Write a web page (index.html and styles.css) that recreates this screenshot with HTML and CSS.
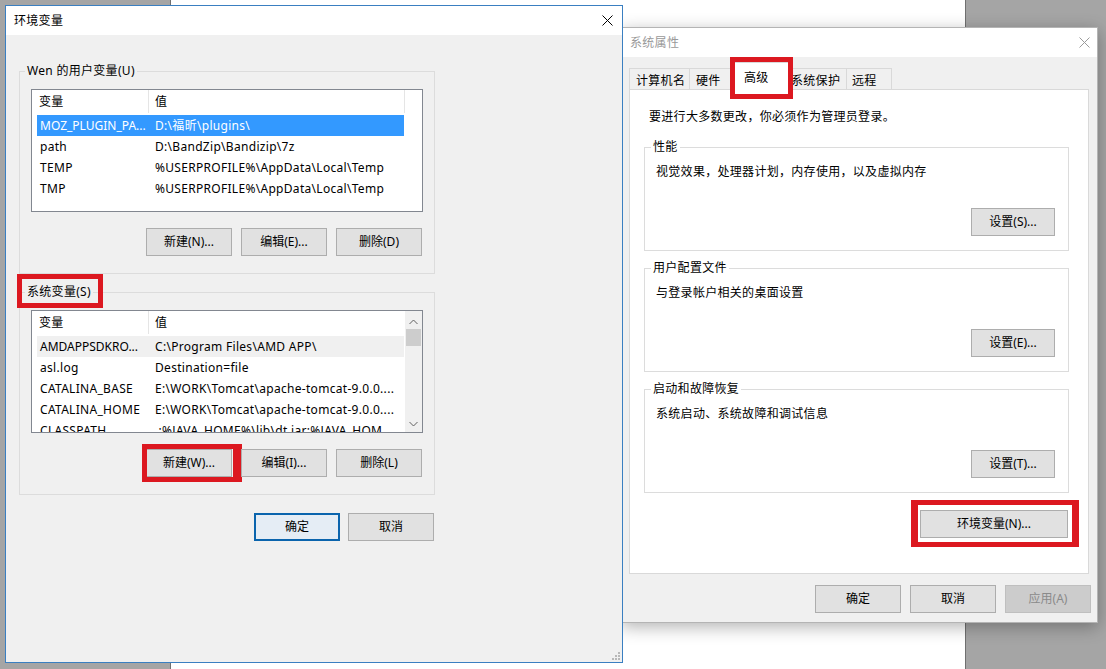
FILE: index.html
```html
<!DOCTYPE html>
<html lang="zh-CN">
<head>
<meta charset="utf-8">
<title>环境变量</title>
<link rel="stylesheet" href="styles.css">
</head>
<body>
<div class="desktop">
  <div class="bgwin"></div>

  <section class="dlg sys">
    <header class="titlebar">
      <span class="title">系统属性</span>
      <span class="close"><svg width="11" height="11" viewBox="0 0 11 11"><path d="M0.5 0.5L10.5 10.5M10.5 0.5L0.5 10.5" stroke="#9a9a9a" stroke-width="1" fill="none"/></svg></span>
    </header>
    <div class="sys-body">
      <nav class="tabs">
        <span class="tab t1">计算机名</span>
        <span class="tab t2">硬件</span>
        <span class="tab sel">高级<i class="mark m-tab"></i></span>
        <span class="tab t4">系统保护</span>
        <span class="tab t5">远程</span>
      </nav>
      <div class="panel">
        <p class="note">要进行大多数更改，你必须作为管理员登录。</p>
        <fieldset class="grp sg1">
          <legend>性能</legend>
          <p>视觉效果，处理器计划，内存使用，以及虚拟内存</p>
          <div class="brow"><button class="btn bs">设置(S)...</button></div>
        </fieldset>
        <fieldset class="grp sg2">
          <legend>用户配置文件</legend>
          <p>与登录帐户相关的桌面设置</p>
          <div class="brow"><button class="btn bs">设置(E)...</button></div>
        </fieldset>
        <fieldset class="grp sg3">
          <legend>启动和故障恢复</legend>
          <p>系统启动、系统故障和调试信息</p>
          <div class="brow"><button class="btn bs">设置(T)...</button></div>
        </fieldset>
        <div class="envrow"><button class="btn benv">环境变量(N)...<i class="mark m-env"></i></button></div>
      </div>
      <div class="foot">
        <button class="btn">确定</button>
        <button class="btn">取消</button>
        <button class="btn dis">应用(A)</button>
      </div>
    </div>
  </section>

  <section class="dlg env">
    <header class="titlebar">
      <span class="title">环境变量</span>
      <span class="close"><svg width="11" height="11" viewBox="0 0 11 11"><path d="M0.5 0.5L10.5 10.5M10.5 0.5L0.5 10.5" stroke="#000" stroke-width="1" fill="none"/></svg></span>
    </header>
    <div class="env-body">
      <div class="col">
        <fieldset class="grp eg1">
          <legend>Wen 的用户变量(U)</legend>
          <div class="list">
            <div class="lmain">
              <div class="lhead"><span class="hc hc1">变量</span><span class="hc hc2">值</span></div>
              <div class="rows">
                <div class="row sel"><span class="tight">MOZ_PLUGIN_PA...</span><span>D:\福昕\plugins\</span></div>
                <div class="row"><span>path</span><span>D:\BandZip\Bandizip\7z</span></div>
                <div class="row"><span>TEMP</span><span>%USERPROFILE%\AppData\Local\Temp</span></div>
                <div class="row"><span>TMP</span><span>%USERPROFILE%\AppData\Local\Temp</span></div>
              </div>
            </div>
          </div>
          <div class="brow">
            <button class="btn">新建(N)...</button>
            <button class="btn">编辑(E)...</button>
            <button class="btn">删除(D)</button>
          </div>
        </fieldset>

        <fieldset class="grp eg2">
          <legend class="mleg">系统变量(S)<i class="mark m-leg"></i></legend>
          <div class="list">
            <div class="lmain">
              <div class="lhead"><span class="hc hc1">变量</span><span class="hc hc2 last">值</span></div>
              <div class="rows">
                <div class="row hl"><span class="tight">AMDAPPSDKRO...</span><span>C:\Program Files\AMD APP\</span></div>
                <div class="row"><span>asl.log</span><span>Destination=file</span></div>
                <div class="row"><span>CATALINA_BASE</span><span>E:\WORK\Tomcat\apache-tomcat-9.0.0....</span></div>
                <div class="row"><span>CATALINA_HOME</span><span>E:\WORK\Tomcat\apache-tomcat-9.0.0....</span></div>
                <div class="row"><span>CLASSPATH</span><span>.;%JAVA_HOME%\lib\dt.jar;%JAVA_HOM</span></div>
              </div>
            </div>
            <div class="sb">
              <span class="sb-up"><svg width="9" height="6" viewBox="0 0 9 6"><path d="M0.5 5L4.5 1L8.5 5" stroke="#606060" fill="none"/></svg></span>
              <span class="thumb"></span>
              <span class="sb-fill"></span>
              <span class="sb-down"><svg width="9" height="6" viewBox="0 0 9 6"><path d="M0.5 1L4.5 5L8.5 1" stroke="#606060" fill="none"/></svg></span>
            </div>
          </div>
          <div class="brow">
            <button class="btn">新建(W)...<i class="mark m-new"></i></button>
            <button class="btn">编辑(I)...</button>
            <button class="btn">删除(L)</button>
          </div>
        </fieldset>

        <div class="dlgbtns">
          <button class="btn def">确定</button>
          <button class="btn">取消</button>
        </div>
      </div>
      <svg class="grip" width="12" height="12" viewBox="0 0 12 12">
        <rect x="9" y="3" width="2" height="2" fill="#b8b8b8"/>
        <rect x="6" y="6" width="2" height="2" fill="#b8b8b8"/>
        <rect x="9" y="6" width="2" height="2" fill="#b8b8b8"/>
        <rect x="3" y="9" width="2" height="2" fill="#b8b8b8"/>
        <rect x="6" y="9" width="2" height="2" fill="#b8b8b8"/>
        <rect x="9" y="9" width="2" height="2" fill="#b8b8b8"/>
      </svg>
    </div>
  </section>
</div>
</body>
</html>
```

FILE: styles.css
```css
* { box-sizing: border-box; margin: 0; padding: 0; }
html, body { width: 1106px; height: 669px; overflow: hidden; }
body {
  background: #a5a5a5;
  font-family: "Noto Sans", "Noto Sans CJK SC", sans-serif;
  font-size: 12px;
  line-height: 16px;
  letter-spacing: 0.3px;
  color: #000;
}
.desktop { position: relative; width: 1106px; height: 669px; }
.bgwin {
  position: absolute; left: 170px; top: 0; width: 796px; height: 669px;
  background: #fff; border-left: 1px solid #707070; border-right: 1px solid #707070;
}

/* dialogs */
.dlg { position: absolute; display: flex; flex-direction: column; background: #f0f0f0; }
.env { left: 5px; top: 5px; width: 618px; height: 658px; border: 1px solid #3a7fc1; z-index: 2; }
.sys {
  left: 621px; top: 27px; width: 477px; height: 596px;
  border: 1px solid #b4b4b4; box-shadow: 0 4px 16px rgba(0,0,0,.3); z-index: 1;
}
.titlebar { flex: none; height: 29px; background: #fff; display: flex; align-items: center; padding-left: 8px; }
.title { flex: 1; }
.sys .title { color: #999; }
.close { flex: none; width: 30px; height: 29px; display: flex; align-items: center; justify-content: center; }
.sys .close { width: 26px; }

/* group boxes */
.grp { border: 1px solid #dcdcdc; min-width: 0; }
.grp legend { padding: 0 2px; line-height: 16px; }
.mleg { position: relative; }

/* env dialog */
.env-body { flex: 1; padding-left: 13px; position: relative; }
.col { width: 416px; display: flex; flex-direction: column; }
.col .grp { padding: 10px 11px 17px; }
.col .grp legend { margin-left: -6px; }
.eg1 { margin-top: 28px; }
.eg2 { margin-top: 10px; }

.list { height: 123px; border: 1px solid #828790; background: #fff; display: flex; overflow: hidden; }
.lmain { flex: 1; min-width: 0; overflow: hidden; }
.lhead { display: flex; height: 24px; }
.hc { height: 23px; padding-top: 1px; line-height: 22px; border-right: 1px solid #e5e5e5; padding-left: 6px; }
.hc1 { width: 117px; padding-left: 7px; }
.hc2 { width: 256px; }
.hc2.last { border-right: 0; }
.rows { padding: 1px 0 0 5px; }
.row { display: grid; grid-template-columns: 112px 255px; width: 367px; height: 21px; line-height: 21px; white-space: nowrap; }
.row span { overflow: hidden; }
.row span:first-child { padding-left: 3px; }
.row span + span { padding-left: 6px; }
.row span.tight { letter-spacing: 0; }
.row.sel { background: #3399ff; color: #fff; }
.row.hl { background: #f0f0f0; }

.sb { flex: none; width: 17px; background: #f0f0f0; display: flex; flex-direction: column; align-items: center; }
.sb-up { height: 18px; padding-top: 4px; display: flex; align-items: center; justify-content: center; }
.thumb { width: 15px; height: 17px; background: #cdcdcd; }
.sb-fill { flex: 1; }
.sb-down { height: 17px; display: flex; align-items: center; justify-content: center; }

.btn {
  font: inherit; line-height: 16px; height: 28px; width: 86px; flex: none;
  background: #e1e1e1; border: 1px solid #adadad; color: #000;
  position: relative; display: flex; align-items: center; justify-content: center;
}
.btn.def { border: 2px solid #0a64ad; background: #e5edf5; }
.btn.dis { background: #cccccc; border-color: #bfbfbf; color: #8a8a8a; }
.brow { display: flex; justify-content: flex-end; gap: 9px; margin-top: 16px; margin-right: 1px; }
.dlgbtns { display: flex; justify-content: flex-end; gap: 8px; margin-top: 18px; margin-right: 1px; }
.grip { position: absolute; right: 1px; bottom: 1px; }

/* system properties dialog */
.sys-body { flex: 1; padding: 5px 6px 0 7px; display: flex; flex-direction: column; }
.tabs { display: flex; align-items: flex-end; height: 27px; position: relative; z-index: 1; }
.tab {
  height: 21px; padding-top: 2px; line-height: 19px; white-space: nowrap;
  border: 1px solid #d9d9d9; border-bottom: 0; background: #f0f0f0; margin-right: -1px; flex: none;
}
.t1 { width: 61px; padding-left: 6px; }
.t2 { width: 45px; padding-left: 6px; }
.t4 { width: 59px; padding-left: 2px; }
.t5 { width: 46px; padding-left: 5px; }
.tab.sel {
  width: 59px; height: 28px; margin: 0 -2px -1px; padding: 7px 0 0 12px; line-height: 16px;
  background: #fff; position: relative;
}
.panel {
  flex: none; width: 460px; height: 485px; background: #fff; border: 1px solid #d9d9d9;
  display: flex; flex-direction: column;
}
.note { margin: 19px 0 0 19px; }
.panel .grp { margin-left: 14px; width: 425px; padding: 9px 13px 14px 11px; }
.panel .grp legend { margin-left: -5px; }
.sg1 { margin-top: 14px; }
.sg2, .sg3 { margin-top: 9px; }
.panel .brow { margin-top: 28px; margin-right: 0; }
.bs { width: 84px; }
.envrow { display: flex; justify-content: flex-end; margin: 17px 0 0 14px; width: 424px; }
.benv { width: 148px; }
.foot { display: flex; justify-content: flex-end; gap: 9px; margin-top: 11px; }

/* red annotation boxes */
.mark { position: absolute; border: 5px solid #dc1820; pointer-events: none; }
.m-leg { top: -10px; left: -8px; right: -10px; bottom: -8px; }
.m-new { top: -6px; left: -5px; right: -11px; bottom: -6px; border-width: 5px 9px 5px 5px; }
.m-tab { top: -6px; left: -2px; right: -4px; bottom: -9px; }
.m-env { top: -11px; left: -10px; right: -12px; bottom: -10px; border-width: 5px 7px; }
```
